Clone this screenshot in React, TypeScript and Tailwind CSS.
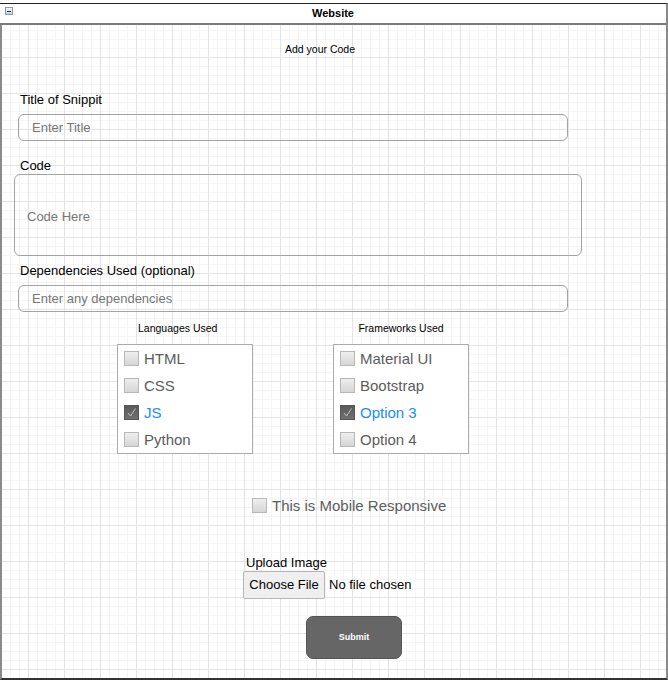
import React from "react";

const font = { fontFamily: '"Liberation Sans", Arial, sans-serif' };

function Box({ checked }: { checked?: boolean }) {
  if (checked) {
    return (
      <div className="w-[15px] h-[15px] shrink-0 box-border border border-[#555] bg-[linear-gradient(#5a5a5a,#707070)] flex items-center justify-center">
        <svg width="11" height="11" viewBox="0 0 11 11">
          <path d="M2 6 L4.5 9 L9.5 1.5" fill="none" stroke="#c8c8c8" strokeWidth="0.9" />
        </svg>
      </div>
    );
  }
  return (
    <div className="w-[15px] h-[15px] shrink-0 box-border border border-[#b8b8b8] bg-[linear-gradient(#eeeeee,#d6d6d6)]" />
  );
}

function Item({ label, checked }: { label: string; checked?: boolean }) {
  return (
    <div className="h-[27px] flex items-center pl-[6px] gap-[5px]">
      <Box checked={checked} />
      <span className={`text-[15px] leading-[17px] ${checked ? "text-[#1a8cff]" : "text-[#5c5c5c]"}`}>{label}</span>
    </div>
  );
}

export default function App() {
  return (
    <div className="w-[668px] h-[682px] bg-white relative overflow-hidden" style={font}>
      <div className="h-[3px]" />
      {/* header */}
      <div className="h-[22px] box-border border-t border-t-[#222] border-b-2 border-b-[#7a7a7a] border-r-2 border-r-[#8a8a8a] bg-white flex items-center relative">
        <div className="absolute left-[5px] top-[3px] w-[8px] h-[8px] box-border border border-[#8c9aa8] bg-[linear-gradient(#f4f6f8,#c9d2da)] flex items-center justify-center">
          <div className="w-[4px] h-[1px] bg-[#333]" />
        </div>
        <div className="w-full text-center text-[11px] font-bold leading-[13px] text-black">Website</div>
      </div>
      {/* body */}
      <div className="h-[655px] box-border border-l-2 border-l-[#8a8a8a] border-r-2 border-r-[#8a8a8a] border-b-2 border-b-[#333] bg-[linear-gradient(to_right,#e3e3e3_1px,transparent_1px),linear-gradient(to_bottom,#e3e3e3_1px,transparent_1px),linear-gradient(to_right,#f5f5f5_1px,transparent_1px),linear-gradient(to_bottom,#f5f5f5_1px,transparent_1px)] bg-[length:36px_36px,36px_36px,9px_9px,9px_9px] bg-[position:26px_32px,26px_32px,26px_32px,26px_32px] flex flex-col items-start">
        <div className="mt-[18px] w-[636px] text-center text-[10.5px] leading-[13px] text-black">Add your Code</div>

        <div className="mt-[36px] ml-[18px] text-[13px] leading-[16px] text-black">Title of Snippit</div>
        <div className="mt-[6px] ml-[16px] w-[550px] h-[27px] box-border border border-[#a3a3a3] rounded-[6px] flex items-center pl-[13px] text-[13px] text-[#767676]">
          Enter Title
        </div>

        <div className="mt-[17px] ml-[18px] text-[13px] leading-[16px] text-black">Code</div>
        <div className="ml-[12px] w-[568px] h-[82px] box-border border border-[#a3a3a3] rounded-[6px] flex items-center pl-[12px] pt-[3px] text-[13px] text-[#767676]">
          Code Here
        </div>

        <div className="mt-[7px] ml-[18px] text-[13px] leading-[16px] text-black">Dependencies Used (optional)</div>
        <div className="mt-[6px] ml-[16px] w-[550px] h-[27px] box-border border border-[#a3a3a3] rounded-[6px] flex items-center pl-[13px] text-[13px] text-[#767676]">
          Enter any dependencies
        </div>

        <div className="mt-[10px] ml-[115px] flex gap-[80px]">
          <div className="w-[136px] flex flex-col">
            <div className="pl-[21px] text-[10.5px] leading-[12px] text-black">Languages Used</div>
            <div className="mt-[10px] box-border border border-[#ababab] bg-white">
              <Item label="HTML" />
              <Item label="CSS" />
              <Item label="JS" checked />
              <Item label="Python" />
            </div>
          </div>
          <div className="w-[136px] flex flex-col">
            <div className="text-center text-[10.5px] leading-[12px] text-black">Frameworks Used</div>
            <div className="mt-[10px] box-border border border-[#ababab] bg-white">
              <Item label="Material UI" />
              <Item label="Bootstrap" />
              <Item label="Option 3" checked />
              <Item label="Option 4" />
            </div>
          </div>
        </div>

        <div className="mt-[42px] ml-[250px] h-[18px] flex items-center gap-[5px]">
          <Box />
          <span className="text-[15px] leading-[17px] text-[#5c5c5c]">This is Mobile Responsive</span>
        </div>

        <div className="mt-[41px] ml-[244px] text-[13px] leading-[16px] text-black">Upload Image</div>
        <div className="ml-[241px] flex items-center">
          <div className="w-[82px] h-[28px] box-border border border-[#b5b5b5] rounded-[2px] bg-[#efefef] flex items-center justify-center text-[13px] text-black">
            Choose File
          </div>
          <span className="ml-[4px] text-[13px] text-black">No file chosen</span>
        </div>

        <div className="mt-[17px] ml-[304px] w-[96px] h-[43px] box-border border border-[#555] rounded-[7px] bg-[#666666] flex items-center justify-center text-[9px] font-bold text-white">
          Submit
        </div>
      </div>
    </div>
  );
}
